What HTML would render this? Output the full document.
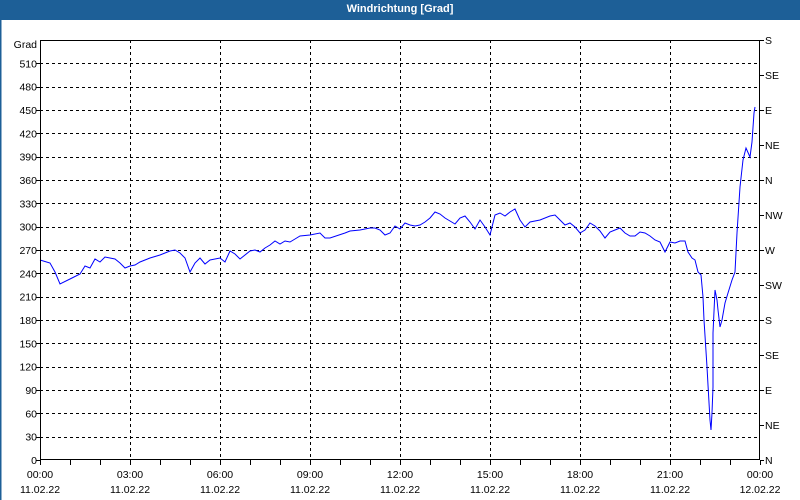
<!DOCTYPE html>
<html><head><meta charset="utf-8"><style>
body{margin:0;width:800px;height:500px;overflow:hidden;background:#fff;font-family:"Liberation Sans",sans-serif;}
#t{position:absolute;left:0;top:0;width:800px;height:20px;background:#1d5f97;color:#fff;font-size:11px;font-weight:bold;text-align:center;line-height:19px;}
svg{position:absolute;left:0;top:0}
text{font-family:"Liberation Sans",sans-serif;font-size:10.5px;fill:#000}
</style></head><body>
<svg width="800" height="500">
<rect x="0" y="20" width="1.5" height="480" fill="#1d5f97"/>
<g id="g" stroke="#000" stroke-dasharray="3,3" stroke-width="1"></g>
<g id="l"></g>
<polyline fill="none" stroke="#0000ff" stroke-width="1" points="40,260 50,263 55,272 60,284 70,279 80,274 85,266 90,268 95,259 100,262 105,257 115,259 120,263 125,268 130,266 135,265 140,262 150,258 160,255 170,251 175,250 180,253 185,258 190,272 195,263 200,258 205,264 210,260 220,258 225,262 230,251 235,254 240,259 250,251 255,250 260,252 265,248 270,245 275,241 280,244 285,241 290,242 295,239 300,236 310,235 320,233 325,238 330,238 345,233 350,231 360,230 370,228 375,228 380,230 385,235 390,233 395,226 400,229 405,223 410,225 415,226 420,225 425,222 430,218 435,212 440,214 445,218 450,221 455,224 460,218 465,216 470,222 475,229 480,220 485,227 490,235 495,215 500,213 505,216 510,212 515,209 520,220 525,227 530,222 540,220 550,216 555,215 560,220 565,225 570,223 575,227 580,233 585,230 590,223 595,226 600,231 605,238 610,232 615,230 620,228 625,233 630,236 635,236 640,232 645,233 650,236 655,240 660,242 665,252 670,242 675,243 680,241 685,241 688,252 692,258 695,260 698,272 701,275 703,297 704,320 707,367 708,385 710,420 711,430 712,413 713,387 713,333 715,290 717,300 718,310 720,327 722,320 725,303 728,293 732,280 735,272 737,233 740,187 743,160 746,148 750,157 752,142 754,113 755,107"/>
<rect x="40.5" y="40.5" width="719" height="419" fill="none" stroke="#000"/>
</svg>
<div id="t">Windrichtung [Grad]</div>
<script>
var g=document.getElementById('g'),l=document.getElementById('l'),ns='http://www.w3.org/2000/svg';
function el(p,tag,a,txt){var e=document.createElementNS(ns,tag);for(var k in a)e.setAttribute(k,a[k]);if(txt)e.textContent=txt;p.appendChild(e);return e;}
for(var i=1;i<=17;i++){var y=Math.round(460-i*420/18)+.5;el(g,'line',{x1:40,x2:760,y1:y,y2:y});}
for(var i=0;i<=17;i++){var y=460-i*420/18;el(l,'text',{x:37,y:y+4,'text-anchor':'end'},String(i*30));el(l,'line',{x1:36,x2:40,y1:Math.round(y)+.5,y2:Math.round(y)+.5,stroke:'#000'});}
el(l,'text',{x:37,y:48,'text-anchor':'end'},'Grad');
for(var i=1;i<8;i++){var x=40+i*90+.5;el(g,'line',{x1:x,x2:x,y1:40,y2:460});}
for(var i=0;i<=24;i++){var x=40+i*30+.5;el(l,'line',{x1:x,x2:x,y1:460,y2:465,stroke:'#000'});}
var tl=['00:00','03:00','06:00','09:00','12:00','15:00','18:00','21:00','00:00'];
for(var i=0;i<=8;i++){var x=40+i*90;el(l,'text',{x:x,y:478,'text-anchor':'middle'},tl[i]);el(l,'text',{x:x,y:493,'text-anchor':'middle'},i==8?'12.02.22':'11.02.22');}
var d=['S','SE','E','NE','N','NW','W','SW','S','SE','E','NE','N'];
for(var i=0;i<13;i++){var y=40+i*35;el(l,'line',{x1:760,x2:764,y1:Math.round(y)+.5,y2:Math.round(y)+.5,stroke:'#000'});el(l,'text',{x:765,y:y+4},d[i]);}
</script>
</body></html>
